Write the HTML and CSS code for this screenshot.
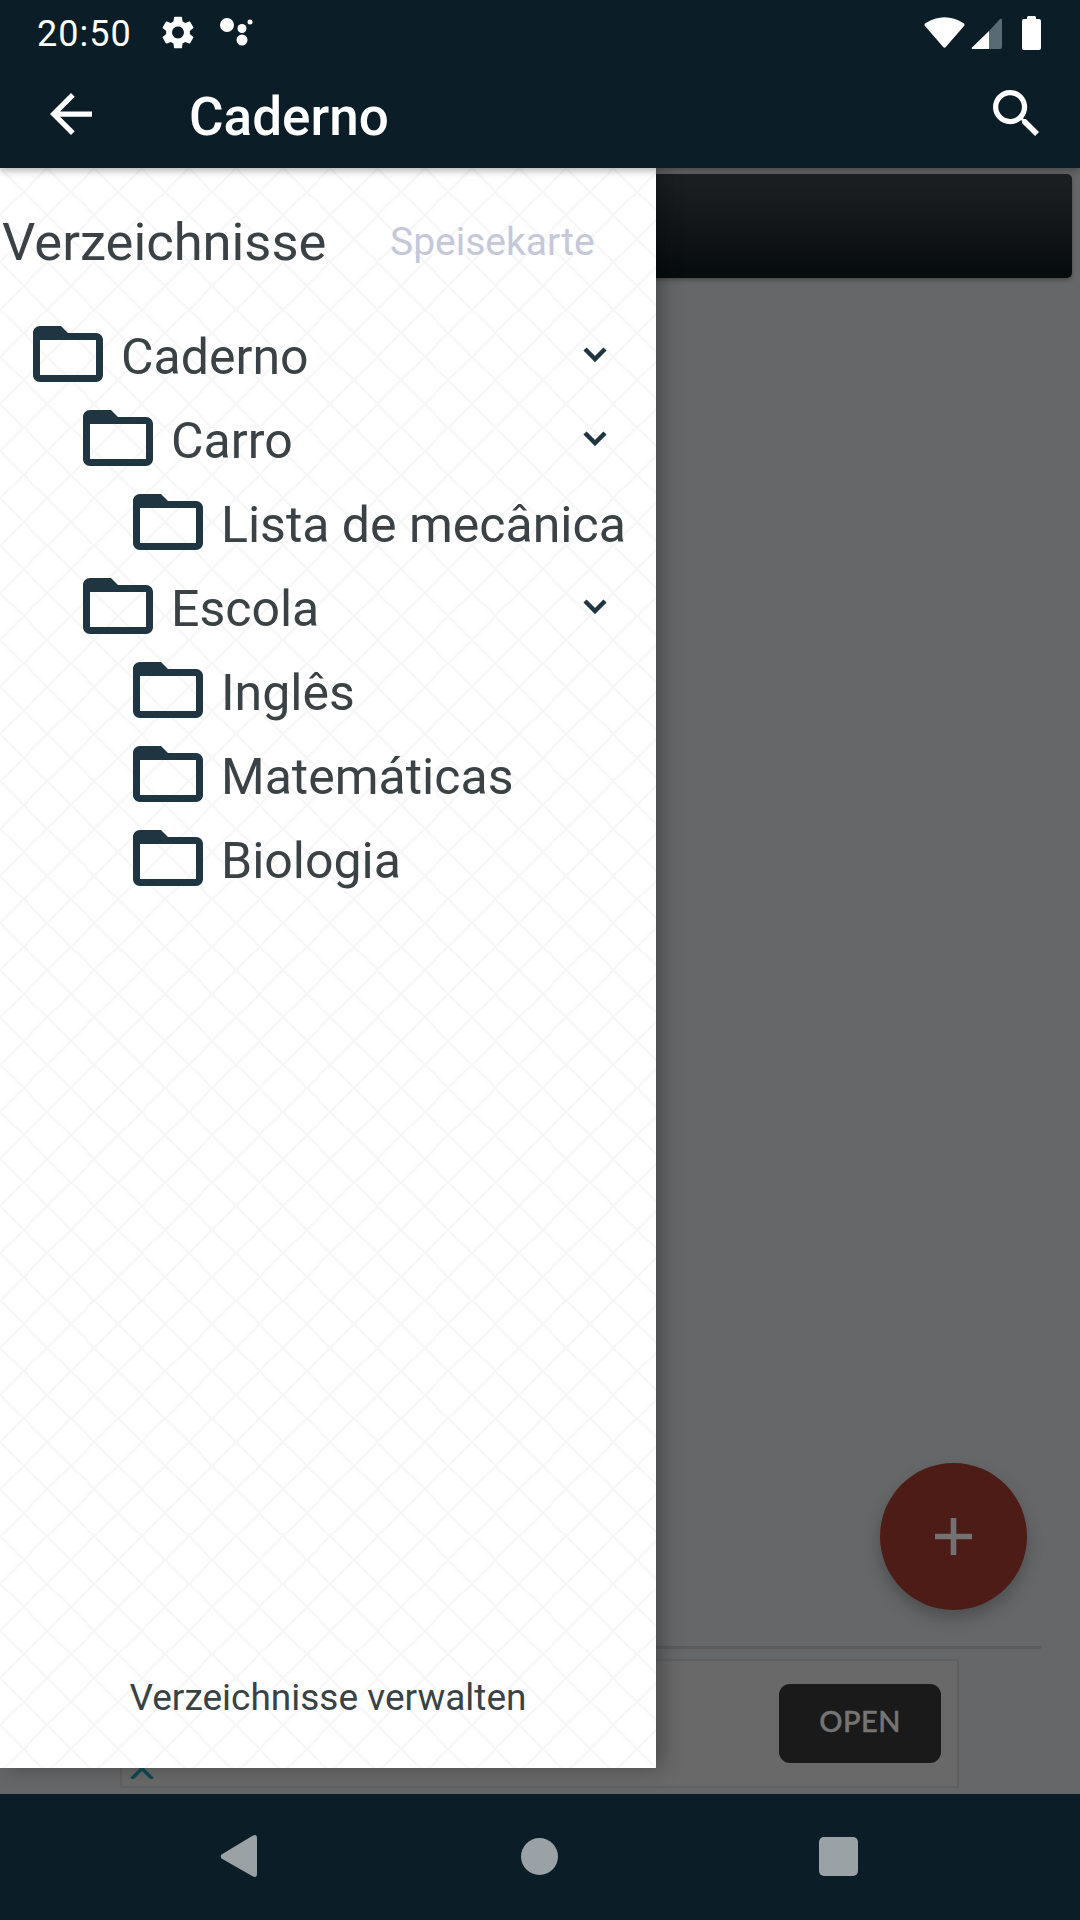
FILE: index.html
```html
<!DOCTYPE html>
<html lang="pt">
<head>
<meta charset="utf-8">
<title>Caderno</title>
<link rel="stylesheet" href="styles.css">
</head>
<body>
<div class="app">
  <header class="topbar">
    <div class="status">
      <span class="time">20:50</span>
      <svg class="gear" viewBox="2.5 2 19 20"><path d="M19.14 12.94c.04-.3.06-.61.06-.94 0-.32-.02-.64-.07-.94l2.03-1.58c.18-.14.23-.41.12-.61l-1.92-3.32c-.12-.22-.37-.29-.59-.22l-2.39.96c-.5-.38-1.03-.7-1.62-.94l-.36-2.54c-.04-.24-.24-.41-.48-.41h-3.84c-.24 0-.43.17-.47.41l-.36 2.54c-.59.24-1.13.57-1.62.94l-2.39-.96c-.22-.08-.47 0-.59.22L2.74 8.87c-.12.21-.08.47.12.61l2.03 1.58c-.05.3-.09.63-.09.94s.02.64.07.94l-2.03 1.58c-.18.14-.23.41-.12.61l1.92 3.32c.12.22.37.29.59.22l2.39-.96c.5.38 1.03.7 1.62.94l.36 2.54c.05.24.24.41.48.41h3.84c.24 0 .44-.17.47-.41l.36-2.54c.59-.24 1.13-.56 1.62-.94l2.39.96c.22.08.47 0 .59-.22l1.92-3.32c.12-.22.07-.47-.12-.61l-2.01-1.58zM12 15.6c-1.98 0-3.6-1.62-3.6-3.6s1.62-3.6 3.6-3.6 3.6 1.62 3.6 3.6-1.62 3.6-3.6 3.6z"/></svg>
      <svg class="dots" viewBox="0 0 34 30"><circle cx="8" cy="8" r="7"/><circle cx="23" cy="11.5" r="4.5"/><circle cx="23" cy="23" r="5.5"/><circle cx="31" cy="5" r="2.5"/></svg>
      <svg class="wifi" viewBox="0 0 41 32"><path d="M1 7.5Q20.500-5 40 7.500Q41 8.500 40 10L21.800 31Q20.500 32.500 19.200 31L1 10Q0 8.500 1 7.500Z"/></svg>
      <svg class="signal" viewBox="0 0 31 31"><path class="dim" d="M18 13 29 1Q31 0 31 2V29Q31 31 29 31H18Z"/><path d="M18 13V31H1.500Q0 31 1 29.500Z"/></svg>
      <svg class="battery" viewBox="0 0 19 34"><path d="M5 3V1.500Q5 0 6.500 0H12.500Q14 0 14 1.500V3H17Q19 3 19 5V32Q19 34 17 34H2Q0 34 0 32V5Q0 3 2 3Z"/></svg>
    </div>
    <div class="toolbar">
      <svg class="back" viewBox="4 4 16 16"><path d="M20 11H7.830l5.590-5.590L12 4l-8 8 8 8 1.410-1.410L7.830 13H20v-2z"/></svg>
      <h1 class="title">Caderno</h1>
      <svg class="search" viewBox="3 3 17.490 17.490"><path d="M15.500 14h-.79l-.28-.27C15.410 12.590 16 11.110 16 9.500 16 5.910 13.090 3 9.500 3S3 5.910 3 9.500 5.910 16 9.500 16c1.610 0 3.090-.59 4.230-1.570l.27.28v.79l5 4.990L20.490 19l-4.990-5zm-6 0C7.010 14 5 11.990 5 9.500S7.010 5 9.500 5 14 7.010 14 9.500 11.990 14 9.500 14z"/></svg>
    </div>
  </header>

  <main class="content">
    <div class="card"></div>
    <div class="spacer"></div>
    <div class="divider"></div>
    <div class="ad">
      <svg class="ad-arrow" viewBox="0 0 24 12"><path d="M1.500 12 12 1.500 22.500 12"/></svg>
      <span class="open">OPEN</span>
    </div>

    <button class="fab" type="button">
      <svg class="plus" viewBox="0 0 37 37"><path d="M15.700 0h5.600v15.700H37v5.600H21.300V37h-5.600V21.300H0v-5.600h15.700z"/></svg>
    </button>

    <aside class="drawer">
      <div class="drawer-head">
        <span class="drawer-title">Verzeichnisse</span>
        <span class="drawer-menu">Speisekarte</span>
      </div>
      <ul class="tree">
        <li class="row lvl0"><svg class="folder" viewBox="2 4 20 16"><path d="M20 6h-8l-2-2H4c-1.100 0-2 .9-2 2v12c0 1.100.9 2 2 2h16c1.100 0 2-.9 2-2V8c0-1.100-.9-2-2-2zm0 12H4V8h16v10z"/></svg><span class="name">Caderno</span><svg class="chev" viewBox="0 0 24 15"><path d="M2 2 12 12 22 2"/></svg></li>
        <li class="row lvl1"><svg class="folder" viewBox="2 4 20 16"><path d="M20 6h-8l-2-2H4c-1.100 0-2 .9-2 2v12c0 1.100.9 2 2 2h16c1.100 0 2-.9 2-2V8c0-1.100-.9-2-2-2zm0 12H4V8h16v10z"/></svg><span class="name">Carro</span><svg class="chev" viewBox="0 0 24 15"><path d="M2 2 12 12 22 2"/></svg></li>
        <li class="row lvl2"><svg class="folder" viewBox="2 4 20 16"><path d="M20 6h-8l-2-2H4c-1.100 0-2 .9-2 2v12c0 1.100.9 2 2 2h16c1.100 0 2-.9 2-2V8c0-1.100-.9-2-2-2zm0 12H4V8h16v10z"/></svg><span class="name">Lista de mecânica</span></li>
        <li class="row lvl1"><svg class="folder" viewBox="2 4 20 16"><path d="M20 6h-8l-2-2H4c-1.100 0-2 .9-2 2v12c0 1.100.9 2 2 2h16c1.100 0 2-.9 2-2V8c0-1.100-.9-2-2-2zm0 12H4V8h16v10z"/></svg><span class="name">Escola</span><svg class="chev" viewBox="0 0 24 15"><path d="M2 2 12 12 22 2"/></svg></li>
        <li class="row lvl2"><svg class="folder" viewBox="2 4 20 16"><path d="M20 6h-8l-2-2H4c-1.100 0-2 .9-2 2v12c0 1.100.9 2 2 2h16c1.100 0 2-.9 2-2V8c0-1.100-.9-2-2-2zm0 12H4V8h16v10z"/></svg><span class="name">Inglês</span></li>
        <li class="row lvl2"><svg class="folder" viewBox="2 4 20 16"><path d="M20 6h-8l-2-2H4c-1.100 0-2 .9-2 2v12c0 1.100.9 2 2 2h16c1.100 0 2-.9 2-2V8c0-1.100-.9-2-2-2zm0 12H4V8h16v10z"/></svg><span class="name">Matemáticas</span></li>
        <li class="row lvl2"><svg class="folder" viewBox="2 4 20 16"><path d="M20 6h-8l-2-2H4c-1.100 0-2 .9-2 2v12c0 1.100.9 2 2 2h16c1.100 0 2-.9 2-2V8c0-1.100-.9-2-2-2zm0 12H4V8h16v10z"/></svg><span class="name">Biologia</span></li>
      </ul>
      <div class="drawer-foot">Verzeichnisse verwalten</div>
    </aside>
  </main>

  <nav class="navbar">
    <svg class="nav-back" viewBox="0 0 37 42"><path d="M1.500 23.500Q0 21 1.500 19.500L33 .5Q37 -1 37 3V39Q37 43 33 41.500Z"/></svg>
    <span class="nav-home"></span>
    <span class="nav-recent"></span>
  </nav>
</div>
</body>
</html>
```
FILE: styles.css
```css
* { box-sizing: border-box; }
html, body { margin: 0; padding: 0; }
body { font-family: Roboto, "Noto Sans", sans-serif; background: #666768; }
.app { width: 1080px; height: 1920px; display: flex; flex-direction: column; overflow: hidden; }

.topbar { height: 168px; flex: none; background: #0b1d27; color: #fff; position: relative; z-index: 3; box-shadow: 0 2px 8px rgba(0,0,0,.35); }
.topbar svg { fill: #fff; display: block; flex: none; }
.status { height: 67px; display: flex; align-items: center; padding-left: 37px; }
.time { font-size: 36px; width: 93px; line-height: 64px; letter-spacing: 1px; white-space: nowrap; }
.gear { width: 32px; height: 33px; margin-left: 32px; margin-top: -3px; }
.dots { width: 34px; height: 30px; margin-left: 25px; margin-top: -3px; }
.wifi { width: 41px; height: 32px; margin-left: 671px; margin-top: -3px; }
.signal { width: 31px; height: 31px; margin-left: 6px; margin-top: -1px; }
.signal .dim { fill: #586a72; }
.battery { width: 19px; height: 34px; margin-left: 20px; margin-top: -1px; }
.toolbar { height: 101px; display: flex; align-items: center; padding-left: 50px; }
.back { width: 42px; height: 42px; margin-top: -8px; }
.title { margin: -1px 0 0 97px; font-size: 53px; font-weight: 500; line-height: 60px; width: 804px; }
.search { width: 46px; height: 46px; margin-top: -9px; }

.content { flex: 1; position: relative; display: flex; flex-direction: column; background: #666768; }
.card { height: 104px; margin: 6px 8px 0; border-radius: 5px; background: linear-gradient(#1c2023, #060b0e); box-shadow: 0 2px 4px rgba(0,0,0,.3); flex: none; }
.spacer { flex: 1; }
.divider { height: 3px; margin: 0 39px 10px 40px; background: #5b5c5d; flex: none; }
.ad { height: 129px; margin: 0 121px 6px 120px; border: 2px solid #5f6061; background: #696969; position: relative; display: flex; align-items: center; justify-content: flex-end; padding-right: 16px; flex: none; }
.ad-arrow { position: absolute; left: 8px; bottom: 7px; width: 24px; height: 12px; fill: none; stroke: #0c4a55; stroke-width: 3.5; }
.open { width: 162px; height: 79px; margin-top: -1px; border-radius: 11px; background: #1a1a1a; color: #757575; font-family: Lato, sans-serif; font-size: 29px; font-weight: 500; letter-spacing: .5px; -webkit-text-stroke: .5px #757575; display: flex; align-items: center; justify-content: center; padding-bottom: 6px; }

.fab { position: absolute; left: 880px; top: 1295px; width: 147px; height: 147px; padding: 0; border: 0; border-radius: 50%; background: #4e1c17; box-shadow: 0 8px 16px rgba(0,0,0,.25); display: flex; align-items: center; justify-content: center; }
.plus { width: 37px; height: 37px; fill: #727272; display: block; }

.drawer { position: absolute; left: 0; top: 0; width: 656px; height: 1600px; display: flex; flex-direction: column; color: #3a4246; background-color: #fff; background-image: url("data:image/svg+xml,%3Csvg xmlns='http://www.w3.org/2000/svg' width='47.2' height='47.2' viewBox='0 0 47.2 47.2'%3E%3Cpath d='M0 0L47.2 47.2M47.2 0L0 47.2' stroke='%23f7f7f7' stroke-width='2.500' fill='none'/%3E%3C/svg%3E"); background-size: 47.2px 47.2px; box-shadow: 6px 0 20px rgba(0,0,0,.3); }
.drawer-head { height: 144px; padding: 3px 0 0 2px; display: flex; align-items: center; flex: none; }
.drawer-title { font-size: 52.5px; line-height: 60px; width: 388px; flex: none; }
.drawer-menu { font-size: 39px; line-height: 50px; color: #c5c8d9; }
.tree { list-style: none; margin: 0; padding: 0; flex: none; }
.row { height: 84px; display: flex; align-items: center; position: relative; }
.lvl0 { padding-left: 33px; }
.lvl1 { padding-left: 83px; }
.lvl2 { padding-left: 133px; }
.folder { width: 70px; height: 56px; fill: #1f3541; display: block; flex: none; }
.name { font-size: 50px; line-height: 84px; margin-left: 18px; white-space: nowrap; margin-top: 6px; }
.chev { position: absolute; left: 583px; top: 35px; width: 24px; height: 15px; fill: none; stroke: #1f3541; stroke-width: 4.5; }
.drawer-foot { margin-top: auto; height: 120px; padding-top: 28px; font-size: 37px; line-height: 44px; text-align: center; flex: none; }

.navbar { height: 126px; flex: none; background: #0b1d27; position: relative; z-index: 3; display: flex; align-items: center; padding: 0 0 2px 220px; }
.nav-back { width: 37px; height: 42px; fill: #9ba2a5; display: block; flex: none; }
.nav-home { width: 37px; height: 37px; margin-left: 264px; border-radius: 50%; background: #9ba2a5; flex: none; }
.nav-recent { width: 39px; height: 39px; margin-left: 261px; border-radius: 5px; background: #9ba2a5; flex: none; }
```
